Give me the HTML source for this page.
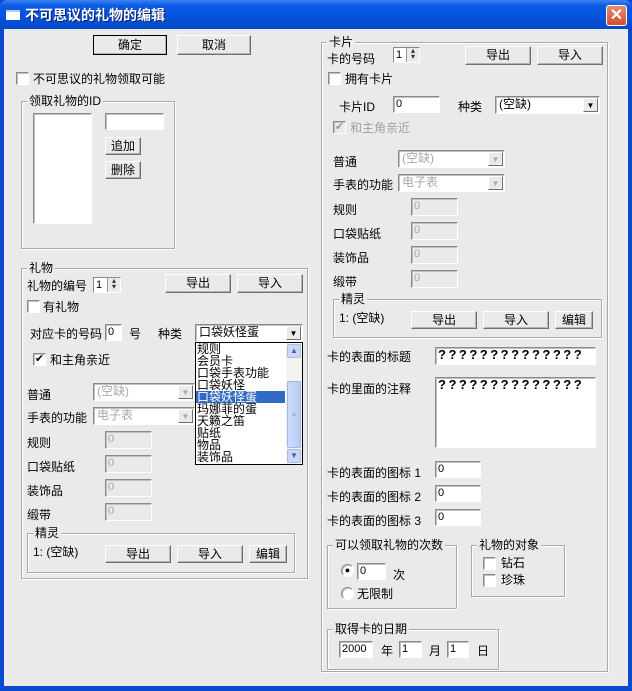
<!DOCTYPE html>
<html><head><meta charset="utf-8"><style>
*{margin:0;padding:0;box-sizing:border-box}
body{width:632px;height:691px;position:relative;overflow:hidden;background:#0a49d0;font:12px "Liberation Sans","Noto Sans CJK SC",sans-serif;color:#000}
#win{position:absolute;left:4px;top:29px;width:624px;height:657px;background:#ebeaea}
#tb{position:absolute;left:0;top:0;width:632px;height:29px;border-radius:7px 7px 0 0;background:linear-gradient(#3d84ee 0,#0a5ae6 20%,#0453dc 60%,#0449c8 100%)}
#tt{position:absolute;left:25px;top:5px;color:#fff;font-weight:bold;font-size:14px;line-height:20px;text-shadow:1px 1px #0a1e6e}
#ic{position:absolute;left:6px;top:10px;width:14px;height:10px;background:#fff;border-top:2px solid #bcd}
#cl{position:absolute;left:606px;top:5px;width:21px;height:21px;border:1px solid #fff;border-radius:3px;background:linear-gradient(#e98a6c,#d1512e);color:#fff;font-size:16px;font-weight:bold;text-align:center;line-height:19px}
.a{position:absolute}
.t{position:absolute;white-space:nowrap;line-height:14px;font-size:12px}
.g{color:#a0a0a0}
.b{position:absolute;background:#ebeaea;border:1px solid;border-color:#fff #6f6f6f #6f6f6f #fff;box-shadow:inset -1px -1px #b5b5b5;text-align:center;line-height:16px;font-size:12px}
.e{position:absolute;background:#fff;border:1px solid;border-color:#8a8a8a #fff #fff #8a8a8a;box-shadow:inset 1px 1px #c0c0c0;font-size:11px;line-height:14px;padding-left:2px}
.d{background:#ebeaea;color:#a8a8a8}
.gr{position:absolute;border:1px solid #a9a9a9;box-shadow:1px 1px 0 #fff,inset 1px 1px 0 #fff}
.gl{position:absolute;background:#ebeaea;padding:0 2px;line-height:14px;white-space:nowrap}
.cb{position:absolute;width:13px;height:13px;background:#fff;border:1px solid;border-color:#8a8a8a #fff #fff #8a8a8a;box-shadow:inset 1px 1px #c0c0c0;font-size:11px;line-height:11px;text-align:center}
.cmb{position:absolute;background:#fff;border:1px solid;border-color:#8a8a8a #fff #fff #8a8a8a;box-shadow:inset 1px 1px #c0c0c0;line-height:15px;padding-left:3px;font-size:12px}
.ar{position:absolute;right:1px;top:1px;bottom:1px;width:15px;background:#ebeaea;border:1px solid;border-color:#fff #6f6f6f #6f6f6f #fff;font-size:8px;text-align:center;line-height:13px}
.sp{position:absolute;background:#fff;border:1px solid;border-color:#8a8a8a #fff #fff #8a8a8a;font-size:11px;line-height:14px;padding-left:2px}
.sp i{position:absolute;right:0;top:0;width:13px;height:14px;background:#ebeaea;border-left:1px solid #999;font-style:normal;font-size:8px;line-height:6px;text-align:center;color:#333}
</style></head><body>
<div id="tb"><div id="ic"></div><div id="tt">不可思议的礼物的编辑</div><div id="cl">✕</div></div>
<div id="win"></div>
<div class="a" style="left:0;top:0">
<div class="b" style="left:93px;top:35px;width:74px;height:20px;outline:1px solid #000;outline-offset:-1px;line-height:18px">确定</div>
<div class="b" style="left:177px;top:35px;width:74px;height:20px;line-height:18px">取消</div>
<div class="cb" style="left:16px;top:72px"></div><div class="t" style="left:33px;top:72px">不可思议的礼物领取可能</div>
<div class="gr" style="left:21px;top:101px;width:154px;height:148px"></div><div class="gl" style="left:27px;top:94px">领取礼物的ID</div>
<div class="e" style="left:33px;top:113px;width:59px;height:111px"></div>
<div class="e" style="left:105px;top:113px;width:59px;height:17px"></div>
<div class="b" style="left:105px;top:137px;width:36px;height:18px">追加</div>
<div class="b" style="left:105px;top:161px;width:36px;height:18px">删除</div>

<div class="gr" style="left:21px;top:268px;width:287px;height:311px"></div><div class="gl" style="left:27px;top:261px">礼物</div>
<div class="t" style="left:27px;top:279px">礼物的编号</div>
<div class="sp" style="left:93px;top:277px;width:28px;height:16px">1<i>▴<br>▾</i></div>
<div class="b" style="left:165px;top:274px;width:66px;height:19px">导出</div>
<div class="b" style="left:237px;top:274px;width:66px;height:19px">导入</div>
<div class="cb" style="left:27px;top:300px"></div><div class="t" style="left:43px;top:300px">有礼物</div>
<div class="t" style="left:30px;top:327px">对应卡的号码</div>
<div class="e" style="left:105px;top:324px;width:17px;height:17px">0</div>
<div class="t" style="left:129px;top:327px">号</div><div class="t" style="left:158px;top:327px">种类</div>
<div class="cmb" style="left:195px;top:324px;width:108px;height:18px">口袋妖怪蛋<div class="ar">▼</div></div>
<div class="cb" style="left:33px;top:353px">✔</div><div class="t" style="left:50px;top:353px">和主角亲近</div>
<div class="t" style="left:27px;top:388px">普通</div>
<div class="cmb d" style="left:93px;top:383px;width:102px;height:18px">(空缺)<div class="ar" style="color:#aaa">▼</div></div>
<div class="t" style="left:27px;top:411px">手表的功能</div>
<div class="cmb d" style="left:93px;top:407px;width:102px;height:18px">电子表<div class="ar" style="color:#aaa">▼</div></div>
<div class="t" style="left:27px;top:436px">规则</div><div class="e d" style="left:105px;top:431px;width:47px;height:18px">0</div>
<div class="t" style="left:27px;top:460px">口袋贴纸</div><div class="e d" style="left:105px;top:455px;width:47px;height:18px">0</div>
<div class="t" style="left:27px;top:484px">装饰品</div><div class="e d" style="left:105px;top:479px;width:47px;height:18px">0</div>
<div class="t" style="left:27px;top:508px">缎带</div><div class="e d" style="left:105px;top:503px;width:47px;height:18px">0</div>
<div class="gr" style="left:27px;top:533px;width:268px;height:40px"></div><div class="gl" style="left:33px;top:526px">精灵</div>
<div class="t" style="left:33px;top:545px">1: (空缺)</div>
<div class="b" style="left:105px;top:545px;width:66px;height:18px">导出</div>
<div class="b" style="left:177px;top:545px;width:66px;height:18px">导入</div>
<div class="b" style="left:249px;top:545px;width:38px;height:18px">编辑</div>

<div class="a" style="left:195px;top:342px;width:108px;height:123px;background:#fff;border:1px solid #000;font-size:12px;line-height:12px;overflow:hidden">
<div style="padding-left:1px">规则</div><div style="padding-left:1px">会员卡</div><div style="padding-left:1px">口袋手表功能</div><div style="padding-left:1px">口袋妖怪</div>
<div style="background:#316ac5;color:#fff;width:89px;padding-left:1px">口袋妖怪蛋</div>
<div style="padding-left:1px">玛娜菲的蛋</div><div style="padding-left:1px">天籁之笛</div><div style="padding-left:1px">贴纸</div><div style="padding-left:1px">物品</div><div style="padding-left:1px">装饰品</div>
<div class="a" style="right:0;top:0;width:16px;height:121px;background:#f3f3ef">
<div class="a" style="left:1px;top:1px;width:14px;height:14px;background:#c9d8f6;border:1px solid #a8bde8;border-radius:2px;font-size:8px;text-align:center;line-height:12px;color:#4d6185">▲</div>
<div class="a" style="left:1px;top:38px;width:14px;height:67px;background:linear-gradient(90deg,#cdddfb,#b7cdf7);border:1px solid #9fb7e6;border-radius:2px;font-size:8px;text-align:center;line-height:65px;color:#8aa0d0">≡</div>
<div class="a" style="left:1px;top:106px;width:14px;height:14px;background:#c9d8f6;border:1px solid #a8bde8;border-radius:2px;font-size:8px;text-align:center;line-height:12px;color:#4d6185">▼</div>
</div></div>

<div class="gr" style="left:321px;top:42px;width:287px;height:630px"></div><div class="gl" style="left:327px;top:35px">卡片</div>
<div class="t" style="left:327px;top:52px">卡的号码</div>
<div class="sp" style="left:393px;top:47px;width:27px;height:16px">1<i>▴<br>▾</i></div>
<div class="b" style="left:465px;top:46px;width:66px;height:19px">导出</div>
<div class="b" style="left:537px;top:46px;width:66px;height:19px">导入</div>
<div class="cb" style="left:328px;top:72px"></div><div class="t" style="left:345px;top:72px">拥有卡片</div>
<div class="t" style="left:339px;top:100px">卡片ID</div>
<div class="e" style="left:393px;top:96px;width:47px;height:17px">0</div>
<div class="t" style="left:458px;top:100px">种类</div>
<div class="cmb" style="left:495px;top:96px;width:105px;height:18px">(空缺)<div class="ar">▼</div></div>
<div class="cb" style="left:333px;top:121px;background:#ebeaea;color:#999">✔</div><div class="t g" style="left:350px;top:121px">和主角亲近</div>
<div class="t" style="left:333px;top:155px">普通</div>
<div class="cmb d" style="left:398px;top:150px;width:107px;height:18px">(空缺)<div class="ar" style="color:#aaa">▼</div></div>
<div class="t" style="left:333px;top:178px">手表的功能</div>
<div class="cmb d" style="left:398px;top:174px;width:107px;height:18px">电子表<div class="ar" style="color:#aaa">▼</div></div>
<div class="t" style="left:333px;top:203px">规则</div><div class="e d" style="left:411px;top:198px;width:47px;height:18px">0</div>
<div class="t" style="left:333px;top:227px">口袋贴纸</div><div class="e d" style="left:411px;top:222px;width:47px;height:18px">0</div>
<div class="t" style="left:333px;top:251px">装饰品</div><div class="e d" style="left:411px;top:246px;width:47px;height:18px">0</div>
<div class="t" style="left:333px;top:275px">缎带</div><div class="e d" style="left:411px;top:270px;width:47px;height:18px">0</div>
<div class="gr" style="left:333px;top:299px;width:269px;height:39px"></div><div class="gl" style="left:339px;top:292px">精灵</div>
<div class="t" style="left:339px;top:311px">1: (空缺)</div>
<div class="b" style="left:411px;top:311px;width:66px;height:18px">导出</div>
<div class="b" style="left:483px;top:311px;width:66px;height:18px">导入</div>
<div class="b" style="left:555px;top:311px;width:38px;height:18px">编辑</div>
<div class="t" style="left:327px;top:350px">卡的表面的标题</div>
<div class="e" style="left:435px;top:347px;width:161px;height:18px;font-size:13px;letter-spacing:2.5px;font-weight:bold">??????????????</div>
<div class="t" style="left:327px;top:382px">卡的里面的注释</div>
<div class="e" style="left:435px;top:377px;width:161px;height:71px;font-size:13px;letter-spacing:2.5px;font-weight:bold">??????????????</div>
<div class="t" style="left:327px;top:466px">卡的表面的图标 1</div><div class="e" style="left:435px;top:461px;width:46px;height:17px">0</div>
<div class="t" style="left:327px;top:490px">卡的表面的图标 2</div><div class="e" style="left:435px;top:485px;width:46px;height:17px">0</div>
<div class="t" style="left:327px;top:514px">卡的表面的图标 3</div><div class="e" style="left:435px;top:509px;width:46px;height:17px">0</div>
<div class="gr" style="left:327px;top:545px;width:130px;height:64px"></div><div class="gl" style="left:333px;top:538px">可以领取礼物的次数</div>
<div class="cb" style="left:341px;top:564px;border-radius:50%;font-size:9px;line-height:10px">●</div>
<div class="e" style="left:357px;top:563px;width:29px;height:17px">0</div><div class="t" style="left:393px;top:568px">次</div>
<div class="cb" style="left:341px;top:587px;border-radius:50%"></div><div class="t" style="left:357px;top:587px">无限制</div>
<div class="gr" style="left:471px;top:545px;width:94px;height:52px"></div><div class="gl" style="left:477px;top:538px">礼物的对象</div>
<div class="cb" style="left:483px;top:557px"></div><div class="t" style="left:501px;top:556px">钻石</div>
<div class="cb" style="left:483px;top:574px"></div><div class="t" style="left:501px;top:573px">珍珠</div>
<div class="gr" style="left:327px;top:629px;width:172px;height:41px"></div><div class="gl" style="left:333px;top:622px">取得卡的日期</div>
<div class="e" style="left:339px;top:641px;width:34px;height:17px">2000</div><div class="t" style="left:381px;top:644px">年</div>
<div class="e" style="left:399px;top:641px;width:23px;height:17px">1</div><div class="t" style="left:429px;top:644px">月</div>
<div class="e" style="left:447px;top:641px;width:22px;height:17px">1</div><div class="t" style="left:477px;top:644px">日</div>
</div>
</body></html>
